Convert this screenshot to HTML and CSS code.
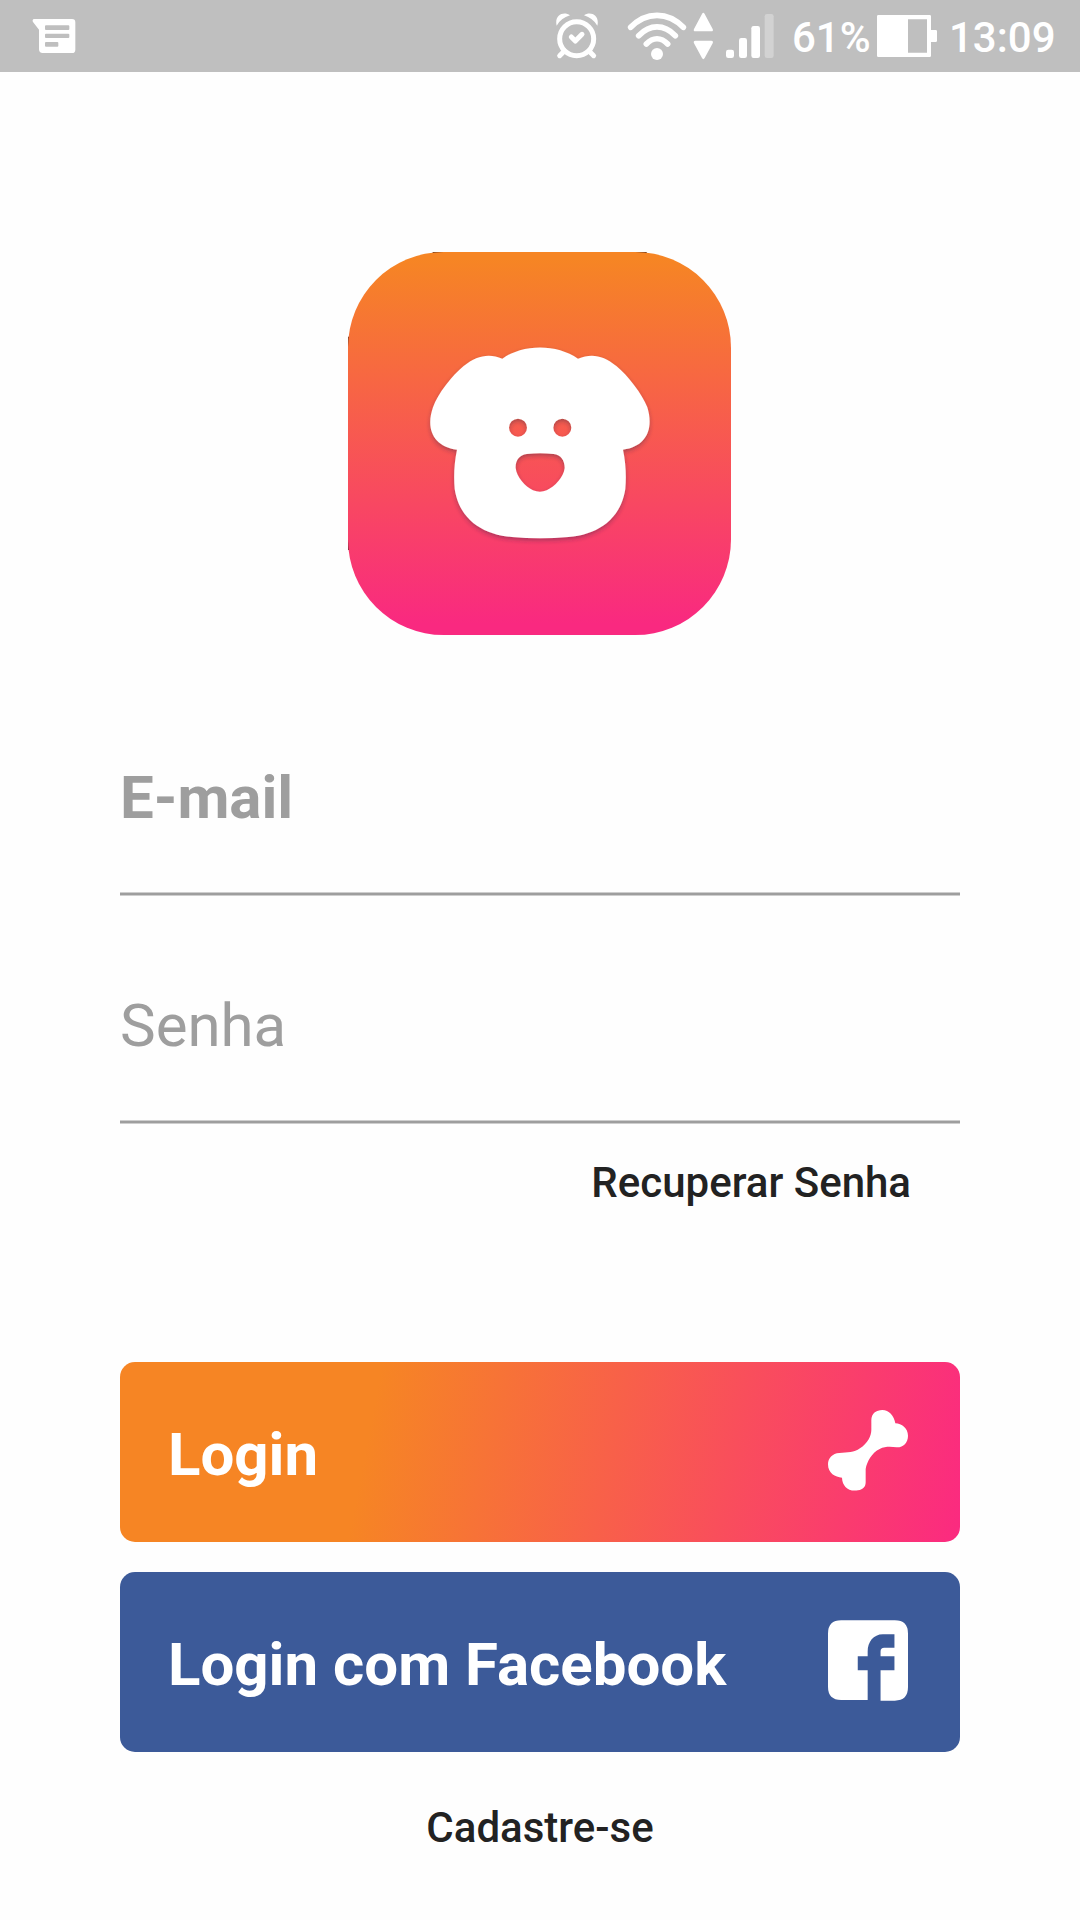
FILE: index.html
```html
<!DOCTYPE html>
<html lang="pt-BR">
<head>
<meta charset="utf-8">
<title>Login</title>
<link rel="stylesheet" href="styles.css">
</head>
<body>
<header class="status-bar">
  <svg class="icon-message" viewBox="96 0 132 216" fill="#fff"><path fill-rule="evenodd" d="M104 57H216Q226 57 226 67V149Q226 159 216 159H128Q117 159 117 148V89L99 66Q95 57 104 57ZM138 76Q135 76 135 79V87Q135 90 138 90H205Q208 90 208 87V79Q208 76 205 76ZM138 101Q135 101 135 104V111Q135 114 138 114H205Q208 114 208 111V104Q208 101 205 101ZM138 126Q135 126 135 129V137Q135 140 138 140H172Q175 140 175 137V129Q175 126 172 126Z"/></svg>
  <div class="status-right">
    <svg class="icon-alarm" viewBox="48 0 126 216" fill="none" stroke="#fff" stroke-linecap="round"><circle cx="110" cy="116" r="51" stroke-width="15"/><path stroke-width="15" stroke-linejoin="round" d="M73 153 59 167M147 153 161 167M94 111 106 123 126 103"/><path fill="#fff" stroke="none" d="M50 77C42 44 72 32 90 46Q63 54 50 77ZM172 77C180 44 150 32 132 46Q158 54 172 77Z"/></svg>
    <svg class="icon-wifi" viewBox="261 0 180 216" fill="none" stroke="#fff" stroke-width="17" stroke-linecap="round"><path d="M272 82C318 34 384 34 430 82M296 107C330 72 372 72 406 107M319 132C339 111 363 111 383 132"/><circle cx="351" cy="162" r="18" fill="#fff" stroke="none"/></svg>
    <svg class="icon-traffic" viewBox="459 0 63 216" fill="#fff"><path d="M486 42Q490 35 494 42L518 87Q521 94 514 94H466Q459 94 462 87ZM486 174Q490 181 494 174L518 130Q521 122 514 122H466Q459 122 462 130Z"/></svg>
    <svg class="icon-signal" viewBox="558 0 144 216" fill="#fff"><rect x="558" y="149" width="24" height="25" rx="7"/><rect x="597" y="114" width="24" height="60" rx="7"/><rect x="634" y="78" width="26" height="96" rx="7"/><rect x="674" y="42" width="27" height="132" rx="7" opacity=".3"/></svg>
    <span class="percent">61%</span>
    <svg class="icon-battery" viewBox="291 0 180 216"><path fill="#fff" fill-rule="evenodd" d="M295 45H449Q453 45 453 49V90H467Q471 90 471 94V122Q471 126 467 126H453V167Q453 171 449 171H295Q291 171 291 167V49Q291 45 295 45ZM384 58V158H441V58Z"/></svg>
    <span class="clock">13:09</span>
  </div>
</header>
<main class="login">
  <svg class="logo" viewBox="24 36 1149 1149">
    <defs>
      <linearGradient id="sunset" x1="0" y1="0" x2="0" y2="1"><stop offset=".02" stop-color="#f68524"/><stop offset=".97" stop-color="#f92980"/></linearGradient>
      <filter id="shade" x="-10%" y="-10%" width="120%" height="120%"><feDropShadow dx="0" dy="7" stdDeviation="7" flood-color="#30204a" flood-opacity=".38"/></filter>
    </defs>
    <path fill="#47251c" d="M278 36H920V39H278ZM24 290H27V930H24Z"/>
    <rect x="24" y="36" width="1149" height="1149" rx="287" fill="url(#sunset)"/>
    <path filter="url(#shade)" fill="#fff" fill-rule="evenodd" d="M487 356C549 311 651 311 714 356C755 339 790 346 829 378C864 407 906 461 922 502C942 567 919 620 849 629C858 670 859 712 856 747C842 837 775 884 685 891Q600 899 516 891C426 884 358 837 344 747C341 712 342 670 351 629C281 620 256 567 279 502C293 461 336 407 371 378C410 346 448 339 487 356ZM534 536A27 27 0 1 0 534 590A27 27 0 1 0 534 536ZM667 536A27 27 0 1 0 667 590A27 27 0 1 0 667 536ZM560 642C538 645 526 661 527 684C530 711 555 739 579 751Q600 759 620 751C645 739 671 711 674 684C674 661 663 645 641 642Q600 638 560 642Z"/>
  </svg>
  <label class="field"><span class="field-email">E-mail</span></label>
  <label class="field"><span>Senha</span></label>
  <a class="link recover">Recuperar Senha</a>
  <button class="button button-login">
    <span class="button-label">Login</span>
    <svg class="button-icon" viewBox="144 210 240 243"><path fill="#fff" d="M274 243C273 221 288 210 307 210C327 210 342 227 346 250C365 250 384 265 384 287C384 309 369 323 350 322C331 320 316 319 299 327C276 338 261 364 257 387V427C257 440 250 449 234 451C204 456 187 438 186 413C166 412 144 400 144 373C144 355 157 340 178 339C203 337 222 338 240 325C262 311 274 288 274 270Z"/></svg>
  </button>
  <button class="button button-facebook">
    <span class="button-label">Login com Facebook</span>
    <svg class="button-icon" viewBox="144 840 242 243"><path fill="#fff" d="M184 840H346Q386 840 386 880V1042Q386 1083 346 1083H303V991H345V949H303V934Q303 923 314 923H345V882H310C281 882 264 906 264 934V949H234V991H264V1081H184Q144 1081 144 1041V880Q144 840 184 840Z"/></svg>
  </button>
  <a class="link signup">Cadastre-se</a>
</main>
</body>
</html>
```
FILE: styles.css
```css
* { box-sizing: border-box; }

body {
  margin: 0;
  min-height: 1920px;
  background: #fefefe;
  font-family: Roboto, sans-serif;
}

.status-bar {
  display: flex;
  justify-content: space-between;
  height: 72px;
  padding: 0 24px 0 32px;
  background: #bfbfbf;
  color: #fff;
  font-size: 42px;
  font-weight: 500;
  line-height: 76px;
}

.status-bar svg { display: block; flex: none; height: 72px; }
.status-right { display: flex; }
.icon-message { width: 44px; }
.icon-alarm { width: 42px; }
.icon-wifi { width: 60px; margin-left: 29px; }
.icon-traffic { width: 21px; margin-left: 6px; }
.icon-signal { width: 48px; margin-left: 12px; }
.percent { width: 85px; padding-left: 18px; margin-right: 18px; white-space: nowrap; }
.icon-battery { width: 60px; }
.clock { width: 107px; margin-left: 12px; }

.login {
  display: flex;
  flex-direction: column;
  padding: 180px 120px 0;
}

.logo {
  align-self: center;
  width: 383px;
  height: 383px;
  margin: 0 1px 33px 0;
}

.field {
  height: 228px;
  padding-top: 95px;
  background: linear-gradient(#cecece 25%, #9e9e9e 25% 75%, #cecece 75%) bottom / 100% 4px no-repeat;
  color: #9e9e9e;
  font-size: 60px;
  line-height: 70px;
}

.field-email { font-weight: 700; }

.link {
  color: #222;
  font-size: 42px;
  font-weight: 500;
  line-height: 50px;
}

.recover { align-self: flex-end; margin: 34px 49px 154px 0; }
.signup { align-self: center; margin-top: 51px; }

.button {
  display: flex;
  align-items: flex-start;
  justify-content: space-between;
  height: 180px;
  padding: 48px 52px 0 48px;
  border: 0;
  border-radius: 15px;
  color: #fff;
  font: 700 60px/70px Roboto, sans-serif;
}

.button-label { padding-top: 10px; }
.button-icon { width: 80px; height: 81px; }
.button-login { background: linear-gradient(101deg, #f68524 30%, #fb2a80); }
.button-facebook { margin-top: 30px; background: #3c5a99; }
```
